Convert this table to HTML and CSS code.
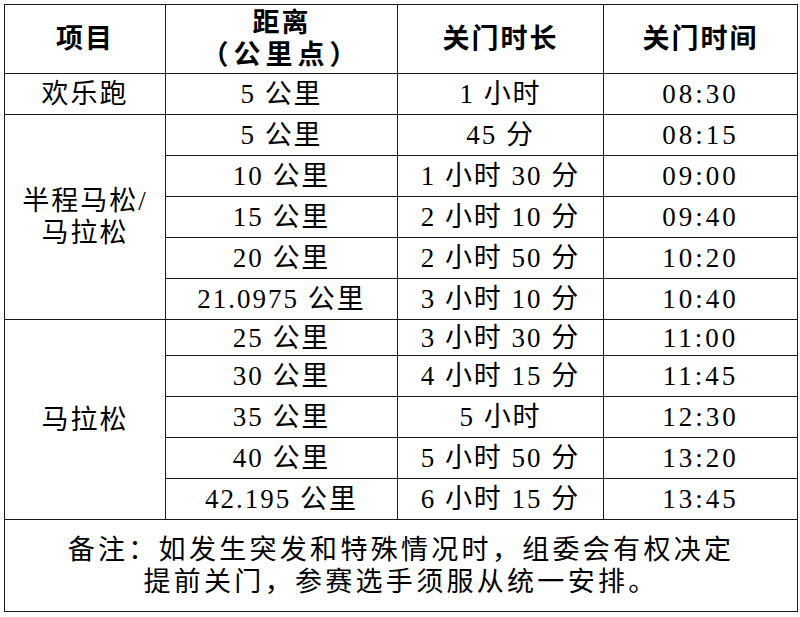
FILE: index.html
```html
<!DOCTYPE html>
<html lang="zh-CN">
<head>
<meta charset="utf-8">
<title>关门时间</title>
<link rel="stylesheet" href="styles.css">
</head>
<body>
<table class="cutoff">
  <colgroup>
    <col class="c1"><col class="c2"><col class="c3"><col class="c4">
  </colgroup>
  <thead>
    <tr class="head">
      <th>项目</th>
      <th><span class="two">距离<br><span class="paren">（公里点）</span></span></th>
      <th>关门时长</th>
      <th>关门时间</th>
    </tr>
  </thead>
  <tbody>
    <tr class="r"><td>欢乐跑</td><td>5 公里</td><td>1 小时</td><td class="t">08:30</td></tr>
    <tr class="r"><td rowspan="5" class="group">半程马松/<br>马拉松</td><td>5 公里</td><td>45 分</td><td class="t">08:15</td></tr>
    <tr class="r"><td>10 公里</td><td>1 小时 30 分</td><td class="t">09:00</td></tr>
    <tr class="r"><td>15 公里</td><td>2 小时 10 分</td><td class="t">09:40</td></tr>
    <tr class="r"><td>20 公里</td><td>2 小时 50 分</td><td class="t">10:20</td></tr>
    <tr class="r"><td>21.0975 公里</td><td>3 小时 10 分</td><td class="t">10:40</td></tr>
    <tr class="r short"><td rowspan="5" class="group">马拉松</td><td>25 公里</td><td>3 小时 30 分</td><td class="t">11:00</td></tr>
    <tr class="r"><td>30 公里</td><td>4 小时 15 分</td><td class="t">11:45</td></tr>
    <tr class="r"><td>35 公里</td><td>5 小时</td><td class="t">12:30</td></tr>
    <tr class="r"><td>40 公里</td><td>5 小时 50 分</td><td class="t">13:20</td></tr>
    <tr class="r"><td>42.195 公里</td><td>6 小时 15 分</td><td class="t">13:45</td></tr>
    <tr class="note"><td colspan="4">备注：如发生突发和特殊情况时，组委会有权决定<br>提前关门，参赛选手须服从统一安排。</td></tr>
  </tbody>
</table>
</body>
</html>
```

FILE: styles.css
```css
html, body {
  margin: 0;
  padding: 0;
  background: #ffffff;
}
body {
  padding: 4px;
  font-family: "Liberation Serif", "Noto Sans CJK SC", serif;
  color: #000;
}
.cutoff {
  border-collapse: collapse;
  table-layout: fixed;
  width: 793px;
}
.c1 { width: 161px; }
.c2 { width: 232px; }
.c3 { width: 206px; }
.c4 { width: 194px; }
.cutoff th,
.cutoff td {
  border: 1px solid #1a1a1a;
  padding: 0;
  text-align: center;
  vertical-align: middle;
  font-size: 27px;
  letter-spacing: 2px;
  font-weight: normal;
  line-height: 32px;
}
.cutoff th {
  font-weight: bold;
}
.head { height: 69px; }
.two { display: inline-block; line-height: 32px; }
.paren { letter-spacing: 5px; }
.r { height: 41px; }
.r.short { height: 36px; }
.cutoff td.t { letter-spacing: 3px; }
.group { line-height: 38px; }
.note { height: 92px; }
.cutoff .note td { letter-spacing: 3.3px; }
```
